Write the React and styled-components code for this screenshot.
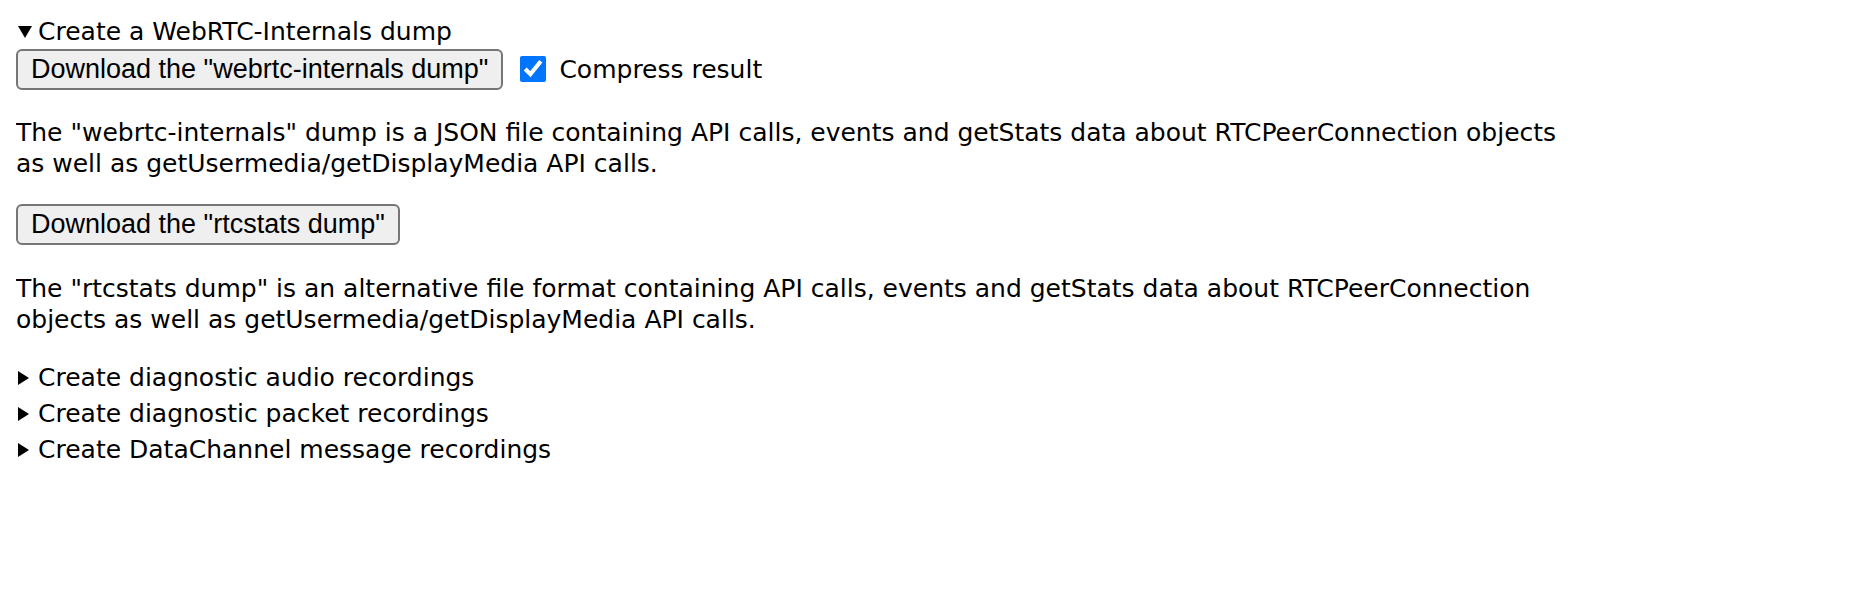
import React from 'react'
import { styled, createGlobalStyle } from 'styled-components'

const GlobalStyle = createGlobalStyle`
  html, body { background: #fff; }
  body {
    margin: 16px;
    font-family: "DejaVu Sans", "Noto Sans", sans-serif;
    font-size: 25px;
    color: #000;
  }
`

export default function App() {
  return (
    <>
      <GlobalStyle />
      <Page>
        <Section>
          <Summary>
            <Marker $open />
            Create a WebRTC-Internals dump
          </Summary>
          <ButtonRow>
            <DumpButton>Download the "webrtc-internals dump"</DumpButton>
            <CheckLabel>
              <Check type="checkbox" defaultChecked />
              Compress result
            </CheckLabel>
          </ButtonRow>
          <Text>
            The "webrtc-internals" dump is a JSON file containing API calls, events and getStats data about RTCPeerConnection objects as well as getUsermedia/getDisplayMedia API calls.
          </Text>
          <ButtonRow $tall>
            <DumpButton>Download the "rtcstats dump"</DumpButton>
          </ButtonRow>
          <Text>
            The "rtcstats dump" is an alternative file format containing API calls, events and getStats data about RTCPeerConnection objects as well as getUsermedia/getDisplayMedia API calls.
          </Text>
        </Section>
        <ClosedList>
          <ClosedSummary><Marker />Create diagnostic audio recordings</ClosedSummary>
          <ClosedSummary><Marker />Create diagnostic packet recordings</ClosedSummary>
          <ClosedSummary><Marker />Create DataChannel message recordings</ClosedSummary>
        </ClosedList>
      </Page>
    </>
  )
}

const Page = styled.div`
  display: flex;
  flex-direction: column;
`

const Section = styled.div`
  display: flex;
  flex-direction: column;
`

const Summary = styled.div`
  display: flex;
  align-items: center;
  height: 31px;
  line-height: 31px;
`

const ClosedList = styled.div`
  display: flex;
  flex-direction: column;
  padding-top: 3px;
`

const ClosedSummary = styled(Summary)`
  height: 36px;
  line-height: 36px;
`

const Marker = styled.span`
  display: inline-block;
  width: 0;
  height: 0;
  margin-left: 2px;
  ${({ $open }) => $open ? `
    border-left: 7px solid transparent;
    border-right: 7px solid transparent;
    border-top: 12px solid #000;
    margin-right: 6px;
  ` : `
    border-top: 7px solid transparent;
    border-bottom: 7px solid transparent;
    border-left: 11px solid #000;
    margin-right: 9px;
  `}
`

const ButtonRow = styled.div`
  display: flex;
  align-items: center;
  height: ${({ $tall }) => ($tall ? '46px' : '44px')};
  gap: 17px;
`

const DumpButton = styled.button`
  height: 41px;
  padding: 0 13px;
  font-family: "Liberation Sans", Arial, sans-serif;
  font-size: 27px;
  color: #000;
  background: #efefef;
  border: 2px solid #767676;
  border-radius: 6px;
`

const CheckLabel = styled.label`
  display: flex;
  align-items: center;
  gap: 13px;
`

const Check = styled.input`
  width: 26px;
  height: 26px;
  margin: 0;
  accent-color: #0075ff;
`

const Text = styled.p`
  margin: 26px 0 22px;
  max-width: 1562px;
  line-height: 31px;
`
